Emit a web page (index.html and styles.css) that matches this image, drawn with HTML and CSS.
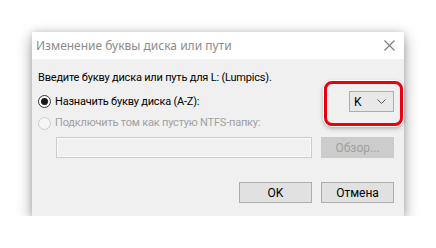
FILE: index.html
```html
<!DOCTYPE html>
<html>
<head>
<meta charset="utf-8">
<link rel="stylesheet" href="styles.css">
</head>
<body>
<div class="dialog">
  <div class="titlebar">
    <span class="title">Изменение буквы диска или пути</span>
    <svg class="close" width="11" height="11" viewBox="0 0 11 11"><path d="M0.5 0.5 L10.5 10.5 M10.5 0.5 L0.5 10.5" stroke="#7a7a7a" stroke-width="1.1" fill="none"/></svg>
  </div>
  <div class="content">
    <div class="prompt">Введите букву диска или путь для L: (Lumpics).</div>
    <div class="row row-assign">
      <span class="radio checked"><span class="dot"></span></span>
      <span class="label">Назначить букву диска (A-Z):</span>
      <div class="combo-wrap">
        <div class="combo">
          <span class="letter">K</span>
          <svg class="chev" width="9" height="5" viewBox="0 0 9 5"><path d="M0.5 0.5 L4.5 4.5 L8.5 0.5" stroke="#555" stroke-width="1" fill="none"/></svg>
        </div>
        <div class="highlight"></div>
      </div>
    </div>
    <div class="row row-mount">
      <span class="radio disabled"></span>
      <span class="label disabled-text">Подключить том как пустую NTFS-папку:</span>
    </div>
    <div class="path-row">
      <div class="field"></div>
      <div class="btn btn-disabled">Обзор...</div>
    </div>
    <div class="actions">
      <div class="btn">OK</div>
      <div class="btn">Отмена</div>
    </div>
  </div>
</div>
</body>
</html>
```
FILE: styles.css
```css
html, body {
  margin: 0;
  padding: 0;
  background: #ffffff;
}
body {
  padding: 32px 32px 0 32px;
  font-family: Roboto, "Noto Sans", sans-serif;
  font-size: 11px;
  letter-spacing: -0.2px;
  color: #000;
}
.dialog {
  width: 372px;
  height: 184px;
  background: #f0f0f0;
  box-shadow: 0 5px 14px rgba(0,0,0,0.38), 0 0 6px rgba(0,0,0,0.12);
  display: flex;
  flex-direction: column;
}
.titlebar {
  height: 27px;
  background: #ffffff;
  display: flex;
  align-items: center;
  justify-content: space-between;
  padding: 0 9px 0 4px;
}
.title {
  color: #8c8c8c;
  font-family: "Noto Sans", sans-serif;
  font-size: 12px;
  letter-spacing: 0;
  line-height: 16px;
}
.close {
  display: block;
}
.content {
  padding: 11px 10px 0 6px;
  display: flex;
  flex-direction: column;
}
.prompt {
  line-height: 16px;
  height: 16px;
}
.row {
  display: flex;
  align-items: center;
}
.row-assign {
  margin-top: 5px;
  height: 21px;
}
.row-mount {
  margin-top: 4px;
  height: 14px;
}
.radio {
  width: 11px;
  height: 11px;
  border: 1px solid #333;
  border-radius: 50%;
  box-sizing: content-box;
  background: #fff;
  display: flex;
  align-items: center;
  justify-content: center;
  flex: none;
}
.radio .dot {
  width: 7px;
  height: 7px;
  border-radius: 50%;
  background: #1a1a1a;
}
.radio.disabled {
  border-color: #cccccc;
  background: #f5f5f5;
}
.label {
  margin-left: 4px;
  line-height: 16px;
}
.disabled-text {
  color: #a0a0a0;
}
.combo-wrap {
  margin-left: auto;
  position: relative;
}
.combo {
  width: 32px;
  height: 19px;
  border: 1px solid #adadad;
  background: #e8e8e8;
  display: flex;
  align-items: center;
  justify-content: space-between;
  padding: 0 7px 0 4px;
  box-sizing: content-box;
}
.letter {
  font-size: 12px;
  line-height: 16px;
}
.chev {
  display: block;
}
.highlight {
  position: absolute;
  left: -25px;
  top: -10px;
  width: 79px;
  height: 45px;
  border: 3px solid #e8000b;
  border-radius: 8px;
  box-sizing: border-box;
  box-shadow: 0 0 0 1px #fff, 0 2px 5px rgba(0,0,0,0.35);
}
.path-row {
  margin-top: 7px;
  display: flex;
  align-items: center;
  padding-left: 18px;
}
.field {
  width: 254px;
  height: 19px;
  border: 1px solid #cccccc;
  background: #f0f0f0;
  box-shadow: inset 0 0 0 1px #fafafa;
}
.btn {
  width: 71px;
  height: 19px;
  border: 1px solid #adadad;
  background: #e1e1e1;
  display: flex;
  align-items: center;
  justify-content: center;
  line-height: 16px;
  font-size: 12px;
  letter-spacing: 0;
}
.path-row .btn {
  margin-left: 9px;
}
.btn-disabled {
  background: #cccccc;
  border-color: #cccccc;
  color: #a0a0a0;
}
.actions {
  margin-top: 24px;
  display: flex;
  justify-content: flex-end;
  gap: 9px;
}
```
